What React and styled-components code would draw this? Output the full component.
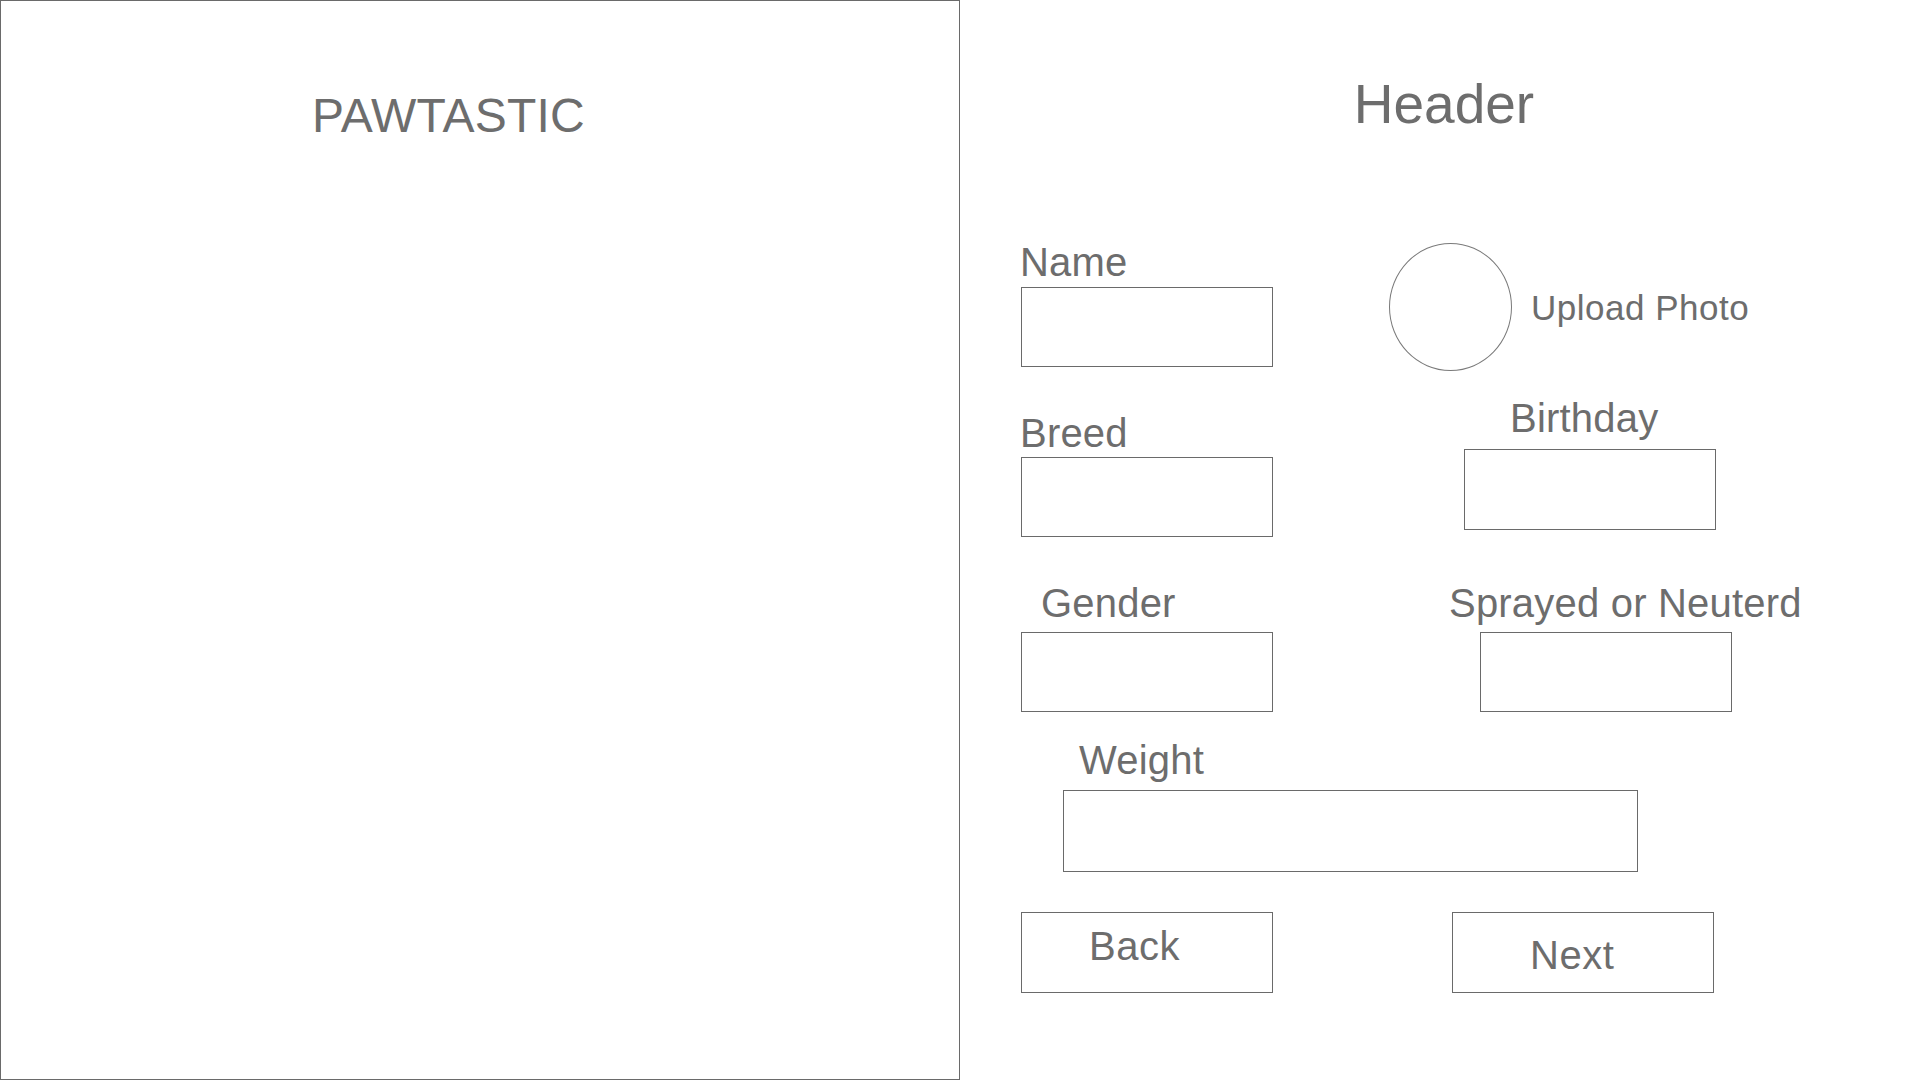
import React from "react";
import styled, { createGlobalStyle } from "styled-components";

const GlobalStyle = createGlobalStyle`
  html, body { margin: 0; padding: 0; background: #ffffff; }
  body { font-family: "Liberation Sans", Arial, Helvetica, sans-serif; color: #6d6d6d; }
  * { box-sizing: border-box; }
`;

const Page = styled.div`
  display: flex;
  width: 1920px;
  height: 1080px;
  overflow: hidden;
`;

const BrandPanel = styled.aside`
  width: 960px;
  height: 1080px;
  border: 1px solid #6a6a6a;
  padding: 91px 0 0 311px;
`;

const Brand = styled.h1`
  margin: 0;
  font-size: 48px;
  line-height: 48px;
  font-weight: 400;
  letter-spacing: 0.2px;
  color: #6d6d6d;
`;

const FormPanel = styled.main`
  flex: 1;
  display: flex;
  flex-direction: column;
  padding: 77px 0 0 61px;
`;

const Title = styled.h2`
  margin: 0 0 0 -53px;
  font-size: 55px;
  line-height: 54px;
  font-weight: 400;
  text-align: center;
  color: #6d6d6d;
`;

const Row = styled.div`
  display: flex;
  align-items: flex-start;
  gap: ${(p) => p.$gap || 0}px;
  margin-top: ${(p) => p.$top || 0}px;
  margin-left: ${(p) => p.$indent || 0}px;
`;

const Field = styled.div`
  display: flex;
  flex-direction: column;
  margin-top: ${(p) => p.$top || 0}px;
`;

const Label = styled.label`
  font-size: 40px;
  line-height: 40px;
  letter-spacing: 0.2px;
  color: #6d6d6d;
  margin-left: ${(p) => p.$indent || 0}px;
  white-space: nowrap;
`;

const Box = styled.div`
  width: ${(p) => p.$w || 252}px;
  height: ${(p) => p.$h || 80}px;
  border: 1px solid #6a6a6a;
  background: #ffffff;
  margin-top: ${(p) => p.$gap || 0}px;
  margin-left: ${(p) => p.$indent || 0}px;
`;

const PhotoGroup = styled.div`
  display: flex;
  align-items: center;
  gap: 19px;
  margin-top: 1px;
`;

const PhotoCircle = styled.div`
  width: 123px;
  height: 128px;
  border-radius: 50%;
  border: 1px solid #7a7a7a;
`;

const PhotoLabel = styled.span`
  font-size: 35px;
  line-height: 35px;
  letter-spacing: 0.5px;
  color: #6d6d6d;
`;

const Button = styled.button`
  width: ${(p) => p.$w || 252}px;
  height: 81px;
  border: 1px solid #6a6a6a;
  background: #ffffff;
  border-radius: 0;
  margin: 0;
  padding: ${(p) => p.$pt}px 0 0 ${(p) => p.$pl}px;
  display: flex;
  align-items: flex-start;
  font-family: "Liberation Sans", Arial, Helvetica, sans-serif;
  font-size: 40px;
  line-height: 40px;
  letter-spacing: 0.5px;
  color: #6d6d6d;
  cursor: pointer;
`;

export default function App() {
  return (
    <>
      <GlobalStyle />
      <Page>
        <BrandPanel>
          <Brand>PAWTASTIC</Brand>
        </BrandPanel>
        <FormPanel>
          <Title>Header</Title>

          <Row $top={111} $gap={116}>
            <Field>
              <Label $indent={-1}>Name</Label>
              <Box $gap={5} />
            </Field>
            <PhotoGroup>
              <PhotoCircle />
              <PhotoLabel>Upload Photo</PhotoLabel>
            </PhotoGroup>
          </Row>

          <Row $top={27} $gap={191}>
            <Field $top={15}>
              <Label $indent={-1}>Breed</Label>
              <Box $gap={4} />
            </Field>
            <Field>
              <Label $indent={46}>Birthday</Label>
              <Box $gap={11} $h={81} />
            </Field>
          </Row>

          <Row $top={46} $gap={176}>
            <Field>
              <Label $indent={20}>Gender</Label>
              <Box $gap={9} />
            </Field>
            <Field>
              <Label>Sprayed or Neuterd</Label>
              <Box $gap={9} $indent={31} />
            </Field>
          </Row>

          <Row $top={28} $indent={42}>
            <Field>
              <Label $indent={16}>Weight</Label>
              <Box $gap={10} $w={575} $h={82} />
            </Field>
          </Row>

          <Row $top={40} $gap={179}>
            <Button $pt={13} $pl={67}>Back</Button>
            <Button $pt={22} $pl={77} $w={262}>Next</Button>
          </Row>
        </FormPanel>
      </Page>
    </>
  );
}
